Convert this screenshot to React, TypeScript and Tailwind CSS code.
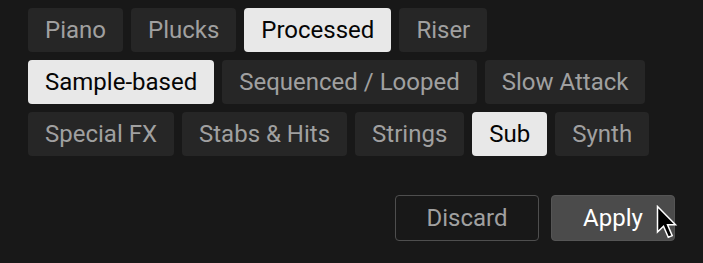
import React, { useState } from "react";

const TAG_ROWS = [
  ["Piano", "Plucks", "Processed", "Riser"],
  ["Sample-based", "Sequenced / Looped", "Slow Attack"],
  ["Special FX", "Stabs & Hits", "Strings", "Sub", "Synth"],
];

function Chip({
  label,
  active,
  onClick,
}: {
  label: string;
  active: boolean;
  onClick: () => void;
}) {
  return (
    <button
      onClick={onClick}
      className={`flex h-[44px] items-center rounded-[4px] px-[17px] text-[24px] font-normal leading-none ${
        active ? "bg-[#e8e8e8] text-[#050505]" : "bg-[#262626] text-[#a0a0a0]"
      }`}
    >
      {label}
    </button>
  );
}

function Cursor() {
  return (
    <svg
      className="pointer-events-none absolute left-[656px] top-[205px]"
      width="24"
      height="36"
      viewBox="0 0 16 24"
    >
      <path
        d="M1 1 L1 18 L5 14.2 L8.2 21.5 L10.8 20.4 L7.7 13.2 L13 13.2 Z"
        fill="#000"
        stroke="#fff"
        strokeWidth="1"
        strokeLinejoin="miter"
      />
    </svg>
  );
}

export default function App() {
  const [selected, setSelected] = useState<string[]>(["Processed", "Sample-based", "Sub"]);

  const toggle = (tag: string) =>
    setSelected((cur) => (cur.includes(tag) ? cur.filter((t) => t !== tag) : [...cur, tag]));

  return (
    <div
      className="relative h-[263px] w-[703px] overflow-hidden bg-[#181818]"
      style={{ fontFamily: "Roboto, 'Noto Sans', sans-serif" }}
    >
      <div className="flex flex-col gap-2 px-[28px] pt-[8px]">
        {TAG_ROWS.map((row, i) => (
          <div key={i} className="flex gap-2">
            {row.map((tag) => (
              <Chip
                key={tag}
                label={tag}
                active={selected.includes(tag)}
                onClick={() => toggle(tag)}
              />
            ))}
          </div>
        ))}
      </div>

      <div className="mt-[39px] flex justify-end gap-3 pr-[28px]">
        <button className="flex h-[46px] w-[144px] items-center justify-center rounded-[4px] border border-[#4e4e4e] text-[24px] font-normal text-[#a0a0a0]">
          Discard
        </button>
        <button className="flex h-[46px] w-[124px] items-center justify-center rounded-[4px] border border-[#555] bg-[#4b4b4b] text-[24px] font-normal text-white">
          Apply
        </button>
      </div>

      <Cursor />
    </div>
  );
}
